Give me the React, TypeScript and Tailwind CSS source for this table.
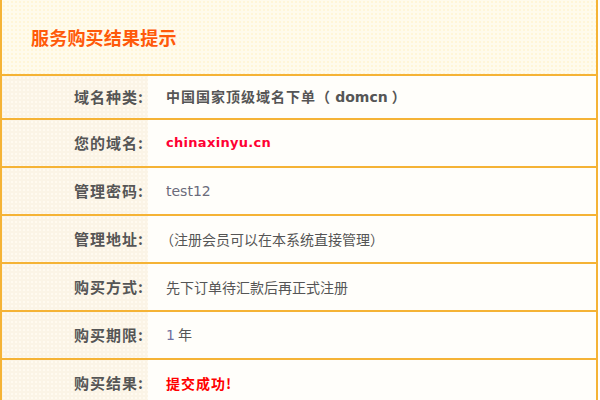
import React from 'react';

const cjk = '"Noto Sans CJK SC", sans-serif';
const latin = '"DejaVu Sans", "Noto Sans CJK SC", sans-serif';

type Row = { label: string; h: string; value: React.ReactNode };

export default function App() {
  const rows: Row[] = [
    {
      label: '域名种类',
      h: 'h-[44px]',
      value: (
        <span className="font-bold text-[#555] tracking-[1px]">
          中国国家顶级域名下单（ <span className="tracking-normal" style={{ fontFamily: latin }}>domcn</span> ）
        </span>
      ),
    },
    {
      label: '您的域名',
      h: 'h-[48px]',
      value: (
        <span className="font-bold text-[#ff0033] text-[13px] tracking-[0.3px]" style={{ fontFamily: latin }}>
          chinaxinyu.cn
        </span>
      ),
    },
    {
      label: '管理密码',
      h: 'h-[48px]',
      value: (
        <span className="text-[#6b6b7a]" style={{ fontFamily: latin }}>
          test12
        </span>
      ),
    },
    {
      label: '管理地址',
      h: 'h-[48px]',
      value: <span className="text-[#555] -ml-[6px]">（注册会员可以在本系统直接管理）</span>,
    },
    {
      label: '购买方式',
      h: 'h-[48px]',
      value: <span className="text-[#555]">先下订单待汇款后再正式注册</span>,
    },
    {
      label: '购买期限',
      h: 'h-[48px]',
      value: (
        <span className="text-[#555]">
          <span className="text-[#7070a0]" style={{ fontFamily: latin }}>1</span> 年
        </span>
      ),
    },
    {
      label: '购买结果',
      h: 'h-[48px]',
      value: <span className="font-bold text-[#ff0000] tracking-[1px]">提交成功!</span>,
    },
  ];

  return (
    <div className="w-[598px] bg-white min-h-[400px]" style={{ fontFamily: cjk }}>
      <div className="border-l-2 border-r-2 border-[#f5b335]">
        {/* title */}
        <div className="h-[76px] border-b-2 border-[#f5b335] bg-[#fffbec] bg-[radial-gradient(#fff6d8_1px,transparent_1px)] bg-[length:4px_4px] flex items-center pl-[29px] pt-[1px]">
          <h1 className="text-[18px] font-bold text-[#ff5a0a] tracking-[0.2px]">服务购买结果提示</h1>
        </div>

        {rows.map((r, i) => (
          <div
            key={i}
            className={`grid grid-cols-[146px_1fr] border-b-2 border-[#f5b335] ${r.h}`}
          >
            <div className="bg-[#fbf4e6] bg-[radial-gradient(#fffaf0_1px,transparent_1px)] bg-[length:4px_4px] flex items-center justify-end pr-[5px] text-[15px] font-bold text-[#555]">
              <span className="tracking-[1px]">{r.label}</span>
              <span>:</span>
            </div>
            <div className="bg-[#fffefa] flex items-center pl-[18px] text-[14px]">{r.value}</div>
          </div>
        ))}
      </div>
    </div>
  );
}
